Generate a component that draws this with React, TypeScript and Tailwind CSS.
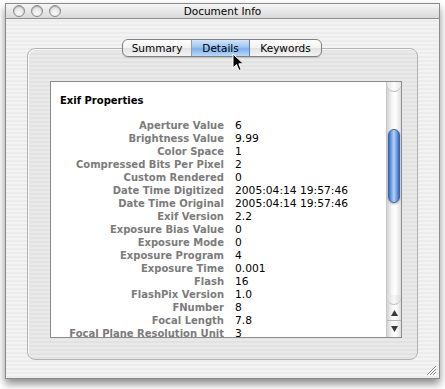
import React from 'react';

const ROWS: [string, string][] = [
  ['Aperture Value', '6'],
  ['Brightness Value', '9.99'],
  ['Color Space', '1'],
  ['Compressed Bits Per Pixel', '2'],
  ['Custom Rendered', '0'],
  ['Date Time Digitized', '2005:04:14 19:57:46'],
  ['Date Time Original', '2005:04:14 19:57:46'],
  ['Exif Version', '2.2'],
  ['Exposure Bias Value', '0'],
  ['Exposure Mode', '0'],
  ['Exposure Program', '4'],
  ['Exposure Time', '0.001'],
  ['Flash', '16'],
  ['FlashPix Version', '1.0'],
  ['FNumber', '8'],
  ['Focal Length', '7.8'],
  ['Focal Plane Resolution Unit', '3'],
];

const TrafficLight = () => (
  <div className="w-[12px] h-[12px] rounded-full border border-[#8a8a8a] bg-[radial-gradient(circle_at_50%_70%,#fafafa,#d4d4d4)] shadow-[inset_0_1px_1px_rgba(0,0,0,0.25)]" />
);

const Cursor = () => (
  <svg className="absolute left-[40px] top-[13px]" width="13" height="19" viewBox="0 0 13 19">
    <path d="M1 1 L1 15 L4.5 11.5 L7 17.5 L9.2 16.6 L6.8 10.8 L11.5 10.8 Z" fill="#000" stroke="#fff" strokeWidth="1" strokeLinejoin="round" />
  </svg>
);

export default function App() {
  return (
    <div className="w-[445px] h-[389px] bg-white overflow-hidden pt-[3px] pl-[5px]" style={{ fontFamily: '"DejaVu Sans", sans-serif' }}>
      <div className="w-[435px] h-[376px] border border-[#8a8a8a] bg-[#ececec] shadow-[0_5px_8px_rgba(0,0,0,0.45)] flex flex-col">
        {/* title bar */}
        <div className="relative h-[15px] flex items-center px-[7px] gap-[6px] border-b border-[#8e8e8e] bg-[linear-gradient(#f6f6f6,#d9d9d9)]">
          <TrafficLight />
          <TrafficLight />
          <TrafficLight />
          <div className="absolute inset-0 flex items-center justify-center text-[10.5px] text-black leading-none">Document Info</div>
        </div>

        {/* body */}
        <div className="relative flex-1 pl-[21px] pt-[29px] bg-[repeating-linear-gradient(0deg,#ececec_0px,#ececec_2px,#f3f3f3_2px,#f3f3f3_4px)]">
          <div className="relative w-[391px] h-[312px] rounded-[8px] border border-[#b4b4b4] bg-[repeating-linear-gradient(0deg,#e2e2e2_0px,#e2e2e2_2px,#e9e9e9_2px,#e9e9e9_4px)] shadow-[inset_1px_1px_0_#f8f8f8] pl-[22px] pt-[32px]">
            {/* tabs */}
            <div className="absolute top-[-10px] left-[94px] z-10 flex h-[18px] rounded-[6px] border border-[#7f7f7f] bg-[linear-gradient(#ffffff,#f2f2f2_50%,#e2e2e2_51%,#f4f4f4)] text-[10.5px] text-black leading-none shadow-[0_1px_1px_rgba(0,0,0,0.15)]">
              <div className="w-[69px] flex items-center justify-center border-r border-[#9a9a9a] rounded-l-[6px]">Summary</div>
              <div className="relative w-[58px] flex items-center justify-center border-r border-[#5a7fb5] bg-[linear-gradient(#d3e5fa,#9ec4f2_45%,#7eb0ee_55%,#b9dafb)]">
                Details
                <Cursor />
              </div>
              <div className="w-[71px] flex items-center justify-center rounded-r-[6px]">Keywords</div>
            </div>

            {/* scroll view */}
            <div className="w-[352px] h-[257px] border border-[#8c8c8c] bg-white flex">
              <div className="flex-1 overflow-hidden pl-[9px] pt-[12px]">
                <div className="text-[10px] font-bold text-black leading-[13px] mb-[12px]">Exif Properties</div>
                <div className="flex flex-col">
                  {ROWS.map(([k, v]) => (
                    <div key={k} className="flex leading-[13px] h-[13px] whitespace-nowrap">
                      <div className="w-[164px] text-right text-[10px] font-bold text-[#7b7b7b]">{k}</div>
                      <div className="pl-[11px] text-[10.7px] text-black">{v}</div>
                    </div>
                  ))}
                </div>
              </div>

              {/* scrollbar */}
              <div className="w-[15px] flex flex-col bg-[linear-gradient(90deg,#d2d2d2,#f6f6f6_35%,#ffffff_60%,#dedede)] border-l border-[#c8c8c8]">
                <div className="h-[10px] rounded-b-[7px] bg-[linear-gradient(90deg,#e4e4e4,#fdfdfd_50%,#e6e6e6)] border-b border-[#bdbdbd]" />
                <div className="h-[37px]" />
                <div className="mx-[1px] h-[74px] rounded-full border border-[#3a64a8] bg-[linear-gradient(90deg,#3d6fc2,#8fb8ef_35%,#b7d3f6_50%,#7ea9e8_70%,#3a69bb)] shadow-[0_1px_2px_rgba(0,0,0,0.3)]" />
                <div className="flex-1" />
                <div className="h-[10px] rounded-b-[7px] bg-[linear-gradient(90deg,#d8d8d8,#f8f8f8_50%,#dadada)] border-b border-[#c0c0c0]" />
                <div className="h-[16px] flex items-center justify-center border-b border-[#b8b8b8]">
                  <svg width="7" height="6" viewBox="0 0 7 6"><path d="M3.5 0 L7 6 L0 6 Z" fill="#3a3a3a" /></svg>
                </div>
                <div className="h-[16px] flex items-center justify-center">
                  <svg width="7" height="6" viewBox="0 0 7 6"><path d="M0 0 L7 0 L3.5 6 Z" fill="#3a3a3a" /></svg>
                </div>
              </div>
            </div>
          </div>

          {/* resize grip */}
          <svg className="absolute right-[2px] bottom-[2px]" width="12" height="12" viewBox="0 0 12 12">
            <path d="M11 2 L2 11 M11 5 L5 11 M11 8 L8 11" stroke="#8a8a8a" strokeWidth="1" />
            <path d="M12 3 L3 12 M12 6 L6 12 M12 9 L9 12" stroke="#ffffff" strokeWidth="1" />
          </svg>
        </div>
      </div>
    </div>
  );
}
